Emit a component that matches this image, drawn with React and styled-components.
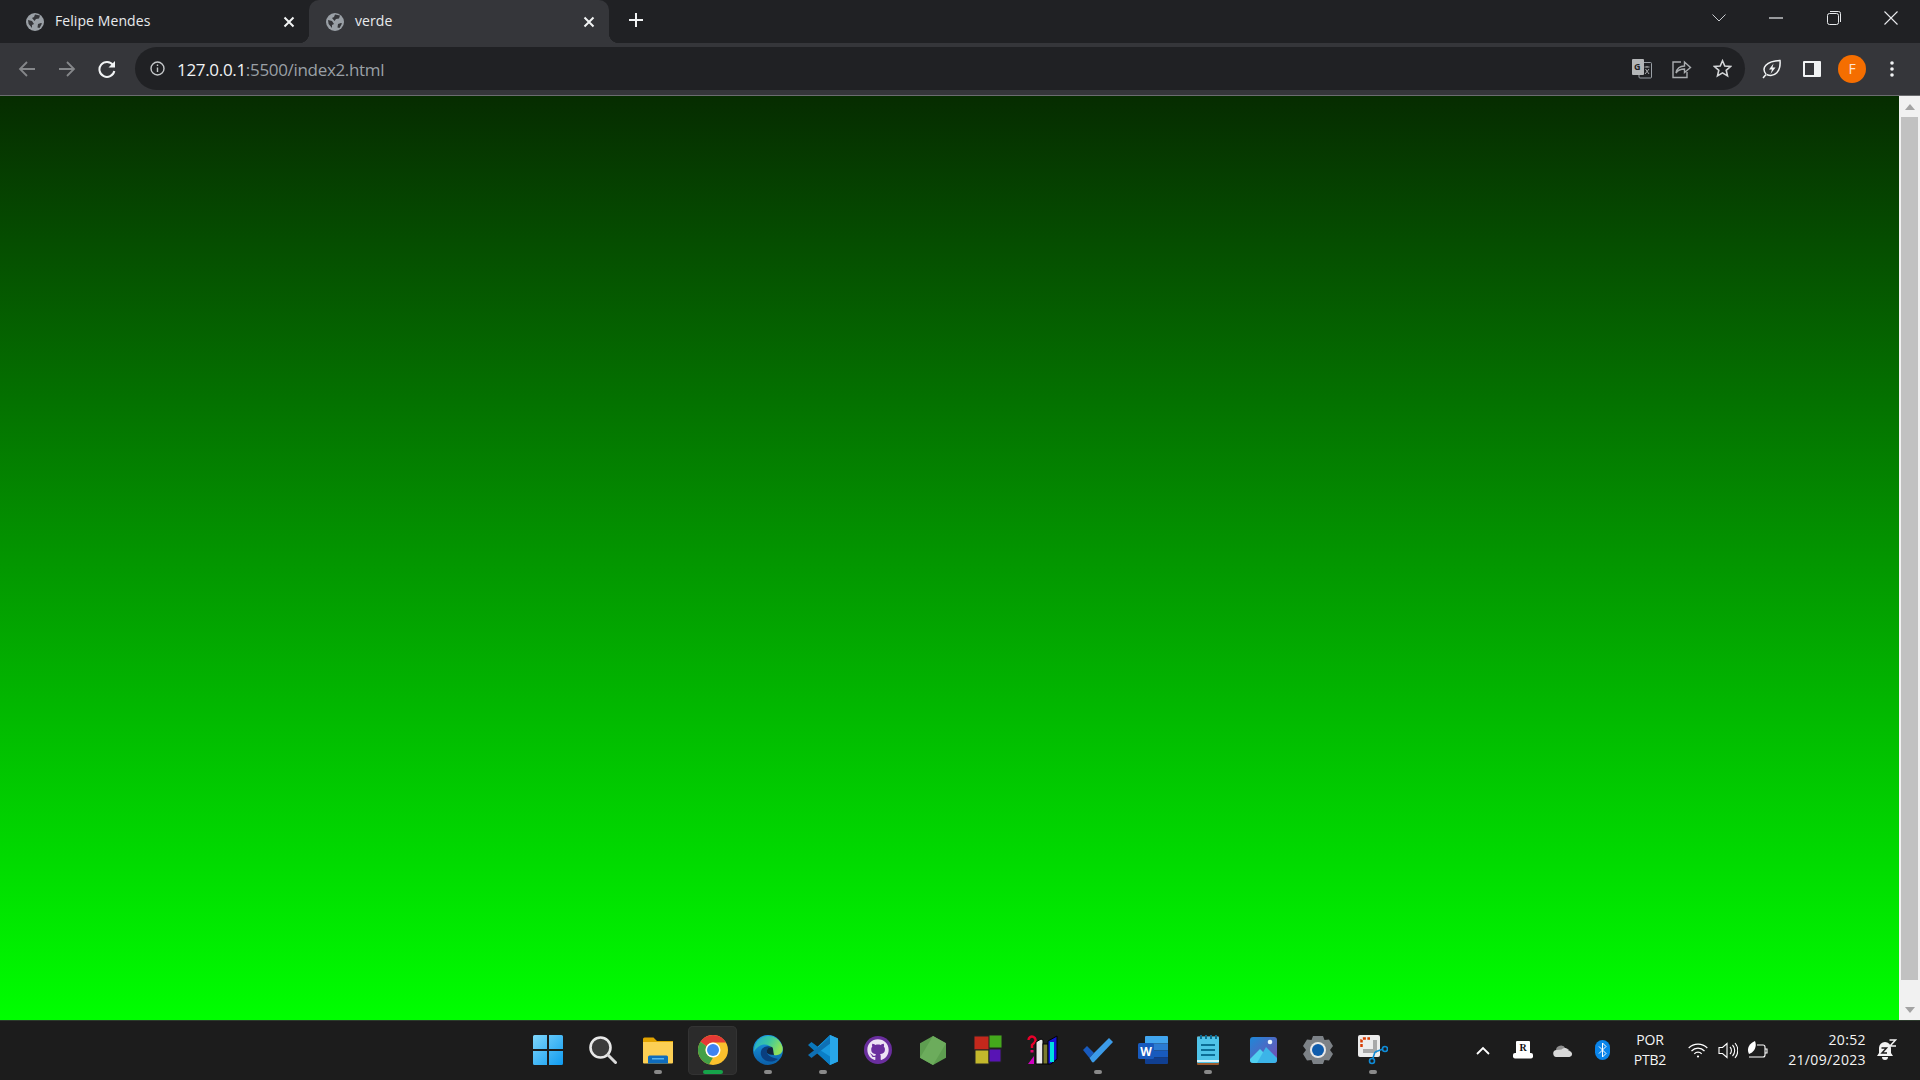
import React from "react"
import styled, { createGlobalStyle } from "styled-components"
import { FaGithub } from "react-icons/fa"

const GlobalStyle = createGlobalStyle`
  html, body {
    margin: 0;
    height: 100%;
    overflow: hidden;
    background: #1c1c1c;
  }
  * {
    box-sizing: border-box;
  }
`

const Screen = styled.div`
  width: 1920px;
  height: 1080px;
  display: flex;
  flex-direction: column;
  font-family: "Open Sans", "Noto Sans", sans-serif;
`

const TabStrip = styled.div`
  height: 43px;
  flex: none;
  display: flex;
  align-items: stretch;
  padding-left: 9px;
  background: #202124;
`

const Tab = styled.div`
  position: relative;
  width: 300px;
  display: flex;
  align-items: center;
  padding: 0 14px 0 17px;
  border-radius: 10px 10px 0 0;
  background: ${(p) => (p.$active ? "#35363a" : "transparent")};
  color: #e8eaed;

  ${(p) =>
    p.$active &&
    `
    &::before, &::after {
      content: "";
      position: absolute;
      bottom: 0;
      width: 10px;
      height: 10px;
    }
    &::before {
      left: -10px;
      background: radial-gradient(circle at 0 0, transparent 10px, #35363a 10.5px);
    }
    &::after {
      right: -10px;
      background: radial-gradient(circle at 100% 0, transparent 10px, #35363a 10.5px);
    }
  `}
`

const TabTitle = styled.span`
  flex: 1;
  padding: 0 0 2px 11px;
  font-size: 14px;
  letter-spacing: 0.08px;
`

const IconSlot = styled.span`
  display: flex;
  align-items: center;
  justify-content: center;
  flex: none;
  width: ${(p) => p.$w || 40}px;
  height: ${(p) => p.$h || 40}px;
  color: ${(p) => p.$color || "#e8eaed"};
`

const NewTab = styled(IconSlot)`
  margin-left: 7px;
`

const StripSpacer = styled.div`
  flex: 1;
`

const WindowControl = styled(IconSlot)`
  width: 57.5px;
  height: 36px;
`

const Toolbar = styled.div`
  height: 53px;
  flex: none;
  display: flex;
  align-items: center;
  padding: 0 8px 1px 7px;
  background: #35363a;
  border-bottom: 1px solid #6b6c6f;
`

const Omnibox = styled.div`
  width: 1610px;
  height: 43px;
  margin-left: 8px;
  margin-right: 7px;
  display: flex;
  align-items: center;
  padding: 0 3px 0 2px;
  border-radius: 22px;
  background: #202124;
`

const Url = styled.div`
  flex: 1;
  padding-top: 1px;
  font-size: 17px;
  letter-spacing: -0.32px;
  color: #9aa0a6;
`

const UrlHost = styled.span`
  color: #f1f3f4;
`

const Avatar = styled.div`
  width: 28px;
  height: 28px;
  border-radius: 50%;
  background: #f56e00;
  color: #ffe4d0;
  font-size: 14px;
  display: flex;
  align-items: center;
  justify-content: center;
`

const Main = styled.div`
  flex: 1;
  min-height: 0;
  display: flex;
`

const Page = styled.div`
  flex: 1;
  background: linear-gradient(to bottom, #062c00, #00ff00);
`

const Scrollbar = styled.div`
  width: 21px;
  display: flex;
  flex-direction: column;
  align-items: center;
  background: #f1f1f1;
`

const ScrollArrow = styled.div`
  height: 21px;
  flex: none;
  display: flex;
  align-items: center;
  justify-content: center;
`

const ScrollThumb = styled.div`
  width: 17px;
  height: 863px;
  background: #c1c1c1;
`

const ScrollTrack = styled.div`
  flex: 1;
`

const Taskbar = styled.div`
  height: 60px;
  flex: none;
  display: flex;
  align-items: center;
  padding: 0 0 1px 520px;
  background: #1c1c1c;
  border-top: 1px solid #2c3a2c;
`

const AppButton = styled.div`
  position: relative;
  width: ${(p) => (p.$active ? 49 : 55.07)}px;
  height: 49px;
  margin: 0 ${(p) => (p.$active ? 3.03 : 0)}px;
  display: flex;
  align-items: center;
  justify-content: center;
  border-radius: 5px;
  background: ${(p) => (p.$active ? "#2b2b2b" : "transparent")};
  box-shadow: ${(p) => (p.$active ? "inset 0 0 0 1px #333" : "none")};
`

const Pip = styled.span`
  position: absolute;
  left: 50%;
  bottom: 1px;
  transform: translateX(-50%);
  width: ${(p) => (p.$active ? 20 : 8)}px;
  height: 4px;
  border-radius: 2px;
  background: ${(p) => (p.$active ? "#16a34a" : "#8a8a8a")};
`

const Tray = styled.div`
  display: flex;
  align-items: center;
  margin-left: 62px;
  color: #fff;
`

const TrayIcon = styled(IconSlot)`
  width: ${(p) => p.$w || 40}px;
  height: 40px;
`

const Lang = styled.div`
  width: 54px;
  margin: 0 6px 0 0;
  text-align: center;
  font-size: 14px;
  line-height: 20px;
  letter-spacing: -0.2px;
  color: #f4f4f4;
`

const Clock = styled.div`
  width: 93px;
  text-align: right;
  font-size: 14px;
  line-height: 20px;
  letter-spacing: 0.35px;
  color: #f4f4f4;
`

const Globe = () => (
  <svg width="18" height="18" viewBox="0 0 18 18">
    <circle cx="9" cy="9" r="9" fill="#9aa0a6" />
    <path d="M2 7l4 1 2 3-2 1v3L2.600 11zM9 1.500l5 1-1 3-3 .5-1.500 2L6 5l2-1zM12 11l3-1 1 .5-2.500 4.500-2-.5z" fill="#35363a" />
  </svg>
)

const Close = () => (
  <svg width="12" height="12" viewBox="0 0 12 12" fill="none" stroke="#f1f3f4" strokeWidth="2">
    <path d="M1.500 1.500l9 9M10.500 1.500l-9 9" />
  </svg>
)

const Plus = () => (
  <svg width="16" height="16" viewBox="0 0 16 16" fill="none" stroke="#f1f3f4" strokeWidth="2">
    <path d="M8 1v14M1 8h14" />
  </svg>
)

const Chevron = () => (
  <svg width="14" height="8" viewBox="0 0 14 8" fill="none" stroke="#c9ccd0" strokeWidth="1">
    <path d="M.5.500L7 7 13.500.5" />
  </svg>
)

const Minimize = () => (
  <svg width="14" height="2" viewBox="0 0 14 2">
    <rect width="14" height="1.200" y=".4" fill="#e8eaed" />
  </svg>
)

const Restore = () => (
  <svg width="14" height="14" viewBox="0 0 14 14" fill="none" stroke="#e8eaed" strokeWidth="1">
    <rect x=".5" y="2.500" width="11" height="11" rx="2" />
    <path d="M3 .5h8.500a2 2 0 0 1 2 2V11" />
  </svg>
)

const WinClose = () => (
  <svg width="14" height="14" viewBox="0 0 14 14" fill="none" stroke="#e8eaed" strokeWidth="1.100">
    <path d="M.5.500l13 13M13.500.5l-13 13" />
  </svg>
)

const Arrow = ({ flip, color }) => (
  <svg width="18" height="18" viewBox="0 0 18 18" fill="none" stroke={color} strokeWidth="1.800" style={flip ? { transform: "scaleX(-1)" } : undefined}>
    <path d="M17 9H2M9 2L2 9l7 7" />
  </svg>
)

const Reload = () => (
  <svg width="18" height="18" viewBox="0 0 18 18" fill="none">
    <path d="M15 5A7.500 7.500 0 1 0 16.300 11" stroke="#f1f3f4" strokeWidth="2" />
    <path d="M17 1v6.500h-6.500z" fill="#f1f3f4" />
  </svg>
)

const Info = () => (
  <svg width="15" height="15" viewBox="0 0 15 15" fill="none" stroke="#c4c7c9" strokeWidth="1.400">
    <circle cx="7.500" cy="7.500" r="6.500" />
    <path d="M7.500 6.500v4.500M7.500 3.500v1.600" />
  </svg>
)

const Translate = () => (
  <svg width="20" height="20" viewBox="0 0 20 20">
    <rect x="7" y="3.500" width="12.500" height="15.500" rx="1" fill="#202124" stroke="#9aa0a6" />
    <rect x="0" y="0" width="12" height="16" rx="1" fill="#b4b6b8" />
    <text x="2" y="11" fontSize="9" fontWeight="700" fill="#202124" fontFamily="Open Sans">G</text>
    <path d="M12.500 8h5M15 7v1.500M13 15l4-5M13.500 10l3.500 5" fill="none" stroke="#b4b6b8" strokeWidth=".9" />
  </svg>
)

const Share = () => (
  <svg width="20" height="20" viewBox="0 0 20 20" fill="none" stroke="#a9acaf" strokeWidth="1.400">
    <path d="M9 3H1v15.500h14V13" />
    <path d="M4 14c1-5 4-7 8.500-7V3l6 5.500-6 5V10c-4 0-6.500 1-8.500 4z" />
  </svg>
)

const Star = () => (
  <svg width="19" height="19" viewBox="0 0 19 19" fill="none" stroke="#d4d6d8" strokeWidth="1.600">
    <path d="M9.500 1.800l2.300 5.200 5.700.5-4.300 3.800 1.300 5.600-5-3-5 3 1.300-5.600L1.500 7.500l5.700-.5z" />
  </svg>
)

const Leaf = () => (
  <svg width="20" height="20" viewBox="0 0 20 20" fill="none">
    <path d="M4 15C-1 9 4 2 18 1.500 19 12 13 19 4.500 15.500" stroke="#f1f3f4" strokeWidth="1.500" />
    <path d="M1 19l3-3.500" stroke="#f1f3f4" strokeWidth="1.500" />
    <path d="M11.500 4.500L7 10.500h3L8.500 15l5-6.500h-3z" fill="#f1f3f4" />
  </svg>
)

const SidePanel = () => (
  <svg width="18" height="16" viewBox="0 0 18 16">
    <rect width="18" height="16" rx="1" fill="#f1f3f4" />
    <rect x="2" y="2" width="9" height="12" fill="#35363a" />
  </svg>
)

const Kebab = () => (
  <svg width="4" height="16" viewBox="0 0 4 16" fill="#f1f3f4">
    <circle cx="2" cy="2" r="1.800" />
    <circle cx="2" cy="8" r="1.800" />
    <circle cx="2" cy="14" r="1.800" />
  </svg>
)

const Triangle = ({ down }) => (
  <svg width="10" height="6" viewBox="0 0 10 6">
    <path d={down ? "M0 0h10L5 6z" : "M0 6h10L5 0z"} fill="#a3a3a3" />
  </svg>
)

// taskbar icons

const WindowsIcon = () => (
  <svg width="30" height="30" viewBox="0 0 30 30">
    <defs>
      <linearGradient id="win" x1="0" y1="0" x2="1" y2="1">
        <stop offset="0" stopColor="#7fd6fb" />
        <stop offset="1" stopColor="#0f9bf0" />
      </linearGradient>
    </defs>
    <path d="M0 1.500A1.500 1.500 0 0 1 1.500 0H14v14H0zM16 0h12.500A1.500 1.500 0 0 1 30 1.500V14H16zM0 16h14v14H1.500A1.500 1.500 0 0 1 0 28.500zM16 16h14v12.500a1.500 1.500 0 0 1-1.500 1.500H16z" fill="url(#win)" />
  </svg>
)

const SearchIcon = () => (
  <svg width="28" height="28" viewBox="0 0 28 28" fill="none">
    <circle cx="11.500" cy="11.500" r="10" fill="#3c3c3c" stroke="#e8e8e8" strokeWidth="2.600" />
    <path d="M19 19l7.500 7.500" stroke="#d9d9d9" strokeWidth="3" strokeLinecap="round" />
  </svg>
)

const FolderIcon = () => (
  <svg width="30" height="28" viewBox="0 0 30 28">
    <path d="M0 3a1.500 1.500 0 0 1 1.500-1.500h9L14 5h16v6H0z" fill="#e2a300" />
    <path d="M0 6h30v20.500a1 1 0 0 1-1 1H1a1 1 0 0 1-1-1z" fill="#fccf54" />
    <path d="M5 21a1.500 1.500 0 0 1 1.500-1.500h17A1.500 1.500 0 0 1 25 21v6.500H5z" fill="#0f6cbd" />
    <rect x="9" y="22" width="12" height="1.500" fill="#58b4ee" />
  </svg>
)

const ChromeIcon = () => (
  <svg width="30" height="30" viewBox="0 0 30 30">
    <circle cx="15" cy="15" r="15" fill="#fbc02d" />
    <path d="M15 0a15 15 0 0 1 13 7.500H15A7.500 7.500 0 0 0 8.500 11.300L2.500 6.700A15 15 0 0 1 15 0z" fill="#e53935" />
    <path d="M2.500 6.700l6 4.600A7.500 7.500 0 0 0 15 22.500L11 29.500A15 15 0 0 1 2.500 6.700z" fill="#43a047" />
    <circle cx="15" cy="15" r="7.500" fill="#fff" />
    <circle cx="15" cy="15" r="6" fill="#3f83f1" />
  </svg>
)

const EdgeIcon = () => (
  <svg width="30" height="30" viewBox="0 0 30 30">
    <defs>
      <linearGradient id="edgeBody" x1="0" y1="0" x2="0" y2="1">
        <stop offset="0" stopColor="#1a9de6" />
        <stop offset="1" stopColor="#0b5fa8" />
      </linearGradient>
      <linearGradient id="edgeTop" x1="0" y1="0" x2="1" y2=".4">
        <stop offset="0" stopColor="#1fa6d8" />
        <stop offset=".55" stopColor="#3cc8a0" />
        <stop offset="1" stopColor="#8fe05c" />
      </linearGradient>
    </defs>
    <circle cx="15" cy="15" r="15" fill="url(#edgeBody)" />
    <path d="M8 3C14-1 26 0 29.500 12 31 19 25 21 21 20c-3-1-1-4-2-6-2-5-9-6-14-2-2 1.500-3 3-4 5C1 11 3 6 8 3z" fill="url(#edgeTop)" />
    <path d="M25 24c-6 4.500-15 3-17-4-1.500-6 4-10.500 11-8-4 0-6 3-5 6 1 3 6 5 11 6z" fill="#0a3f80" />
    <path d="M14 18c-1-3 1-6 5-6 1.500 1 1 4 2 8-3 0-6-1-7-2z" fill="#12233f" />
  </svg>
)

const VSCodeIcon = () => (
  <svg width="30" height="30" viewBox="0 0 30 30">
    <path d="M22 0l8 3.500v23L22 30 6 15z" fill="#1a9ae0" />
    <path d="M22 0v8.500L12 15l10 6.500V30L0 10l3.500-3 7 5.300z" fill="#0a7cc4" opacity="0.95" />
    <path d="M0 20l3.500 3L22 8.500V3z" fill="#0f70b4" />
    <path d="M22 0l8 3.500v23L22 30z" fill="#28a7ea" />
  </svg>
)

const GithubBadge = styled.span`
  width: 28px;
  height: 28px;
  border-radius: 50%;
  background: #6a2e9e;
  color: #ece3f4;
  display: flex;
  align-items: center;
  justify-content: center;
  font-size: 22px;
`

const GithubIcon = () => (
  <GithubBadge>
    <FaGithub />
  </GithubBadge>
)

const NodeIcon = () => (
  <svg width="26" height="29" viewBox="0 0 26 29">
    <path d="M13 0l13 7.300v14.400L13 29 0 21.700V7.300z" fill="#5e9e50" />
    <path d="M13 0l13 7.300L13 29 0 21.700z" fill="#6cac5c" />
  </svg>
)

const ColorBlocksIcon = () => (
  <svg width="28" height="30" viewBox="0 0 28 30">
    <rect x="0" y="1" width="16" height="14" fill="#c3281c" stroke="#222" />
    <rect x="15" y="0" width="13" height="13" fill="#44a81c" stroke="#222" />
    <rect x="1" y="15" width="14" height="14" fill="#c4b82c" stroke="#222" />
    <rect x="15" y="14" width="12" height="13" fill="#5814b4" stroke="#222" />
  </svg>
)

const HelpBooksIcon = () => (
  <svg width="32" height="30" viewBox="0 0 32 30">
    <path d="M1.500 5a3.500 3.500 0 1 1 6 2.500L5 10v3" fill="none" stroke="#e8002a" strokeWidth="2.400" />
    <rect x="3.500" y="15" width="3" height="2.500" fill="#e6006e" />
    <path d="M1 29l6-8v8z" fill="#d000c0" />
    <path d="M9 7l5-3 2 1v24H9z" fill="#e8e8e8" stroke="#000" />
    <rect x="16" y="9" width="5" height="20" fill="#7a7a30" stroke="#000" />
    <path d="M21 6l9-5v23l-6 5h-3z" fill="#1414d8" stroke="#000" />
    <rect x="23" y="7" width="4" height="20" fill="#00e0e0" />
  </svg>
)

const TodoIcon = () => (
  <svg width="30" height="26" viewBox="0 0 30 26">
    <path d="M0 13l4-4 7 7-4.500 5z" fill="#185abd" />
    <path d="M6.500 21L11 16 26 1l4 4-19 20a1.500 1.500 0 0 1-2 0z" fill="#3c9be8" />
  </svg>
)

const WordIcon = () => (
  <svg width="30" height="28" viewBox="0 0 30 28">
    <path d="M7 1a1 1 0 0 1 1-1h21a1 1 0 0 1 1 1v6.500H7z" fill="#41a5ee" />
    <rect x="7" y="7.500" width="23" height="7" fill="#2b7cd3" />
    <rect x="7" y="14.500" width="23" height="7" fill="#185abd" />
    <path d="M7 21.500h23V27a1 1 0 0 1-1 1H8a1 1 0 0 1-1-1z" fill="#103f91" />
    <rect x="0" y="7" width="16" height="16" rx="1.500" fill="#185abd" />
    <text x="8" y="19.500" textAnchor="middle" fontSize="12" fontWeight="700" fill="#fff" fontFamily="Open Sans">W</text>
  </svg>
)

const NotepadIcon = () => (
  <svg width="22" height="30" viewBox="0 0 22 30">
    <rect y="1.500" width="22" height="28.500" rx="1" fill="#9c5a2c" />
    <rect y="1.500" width="22" height="26.500" rx="1" fill="#4fc3e8" />
    <path d="M0 25h22v2H0z" fill="#fff" opacity=".8" />
    <path d="M3 0h2v4H3zM8 0h2v4H8zM13 0h2v4h-2zM18 0h2v4h-2z" fill="#0c6d96" />
    <path d="M4 9h14v2H4zM4 14h14v2H4zM4 19h14v2H4z" fill="#0c6d96" />
  </svg>
)

const PhotosIcon = () => (
  <svg width="27" height="26" viewBox="0 0 27 26">
    <defs>
      <linearGradient id="ph" x1="0" y1="0" x2="1" y2="1">
        <stop offset="0" stopColor="#1e88d8" />
        <stop offset="1" stopColor="#7a4bb0" />
      </linearGradient>
    </defs>
    <rect width="27" height="26" rx="3" fill="url(#ph)" />
    <circle cx="20" cy="5" r="2.300" fill="#e8f4fc" />
    <path d="M0 22l10-10 5 5-6 9H3a3 3 0 0 1-3-3z" fill="#50d0f0" />
    <path d="M7 26L16 10l11 11v2a3 3 0 0 1-3 3z" fill="#3cb4e8" />
  </svg>
)

const SettingsIcon = () => (
  <svg width="30" height="28" viewBox="0 0 30 28">
    <path d="M10 0h10l1.500 4 4.500-.5 4 6.500-3 4 3 4-4 6.500-4.500-.5L20 28H10l-1.500-4-4.500.5L0 18l3-4-3-4 4-6.500 4.500.5z" fill="#7d8287" />
    <circle cx="15" cy="14" r="8" fill="#e8e8e8" />
    <circle cx="15" cy="14" r="6" fill="#0f5cac" />
  </svg>
)

const SnipIcon = () => (
  <svg width="30" height="30" viewBox="0 0 30 30" fill="none">
    <rect width="22" height="22" rx="2" fill="#ececec" />
    <path d="M15 5h4v13H5v-4h10z" fill="#a8a8a8" />
    <path d="M3.500 12V5a1.500 1.500 0 0 1 1.500-1.500h7" stroke="#d83b01" strokeWidth="2.500" strokeDasharray="3 1.500" />
    <path d="M17 17l8-3M17 17l-2 6" stroke="#0f8cd8" strokeWidth="1.600" />
    <circle cx="27" cy="14" r="2.500" stroke="#0f8cd8" strokeWidth="1.600" />
    <circle cx="14" cy="26" r="2.500" stroke="#0f8cd8" strokeWidth="1.600" />
  </svg>
)

const apps = [
  { icon: WindowsIcon },
  { icon: SearchIcon },
  { icon: FolderIcon, pip: true },
  { icon: ChromeIcon, pip: true, active: true },
  { icon: EdgeIcon, pip: true },
  { icon: VSCodeIcon, pip: true },
  { icon: GithubIcon },
  { icon: NodeIcon },
  { icon: ColorBlocksIcon },
  { icon: HelpBooksIcon },
  { icon: TodoIcon, pip: true },
  { icon: WordIcon },
  { icon: NotepadIcon, pip: true },
  { icon: PhotosIcon },
  { icon: SettingsIcon },
  { icon: SnipIcon, pip: true },
]

const TrayChevron = () => (
  <svg width="14" height="9" viewBox="0 0 14 9" fill="none" stroke="#fff" strokeWidth="1.800">
    <path d="M1 8l6-6 6 6" />
  </svg>
)

const RBadge = () => (
  <svg width="20" height="18" viewBox="0 0 20 18">
    <path d="M3 1a1 1 0 0 1 1-1h12a1 1 0 0 1 1 1v11H3z" fill="#fff" />
    <rect y="12" width="20" height="5.500" rx="2" fill="#fff" />
    <text x="10" y="10" textAnchor="middle" fontSize="10" fontWeight="700" fill="#111" fontFamily="Liberation Serif">R</text>
  </svg>
)

const CloudIcon = () => (
  <svg width="20" height="13" viewBox="0 0 20 13">
    <path d="M3 7a5 5 0 0 1 9.500-2.500A4 4 0 0 1 17 8L7 11z" fill="#8e8e8e" />
    <path d="M4 13a3.500 3.500 0 0 1-.5-7l5-.5a4 4 0 0 1 7 1.500 3 3 0 0 1 1 6z" fill="#d8d8d8" />
  </svg>
)

const BluetoothIcon = () => (
  <svg width="15" height="20" viewBox="0 0 15 20">
    <rect width="15" height="20" rx="7.500" fill="#0a84ea" />
    <path d="M4 6.500l7 7L7.500 17V3L11 6.500l-7 7" fill="none" stroke="#fff" strokeWidth="1" />
  </svg>
)

const WifiIcon = () => (
  <svg width="20" height="15" viewBox="0 0 20 15" fill="none" stroke="#fff" strokeWidth="1.200">
    <path d="M.7 5a13 13 0 0 1 18.600 0M3.500 8a9 9 0 0 1 13 0M6.300 10.800a5 5 0 0 1 7.400 0" />
    <circle cx="10" cy="13.500" r="1.100" fill="#fff" stroke="none" />
  </svg>
)

const VolumeIcon = () => (
  <svg width="20" height="17" viewBox="0 0 20 17" fill="none" stroke="#fff" strokeWidth="1.100">
    <path d="M1 5.500h3.500L9 1.500v14l-4.500-4H1z" />
    <path d="M12 5a5 5 0 0 1 0 7M14.500 3a8 8 0 0 1 0 11M17 1a11.500 11.500 0 0 1 0 15" />
  </svg>
)

const BatteryLeaf = () => (
  <svg width="21" height="18" viewBox="0 0 21 18" fill="none" stroke="#fff" strokeWidth="1.100">
    <path d="M10 4h6a2 2 0 0 1 2 2v8a2 2 0 0 1-2 2H2" />
    <path d="M18 8h2v4h-2" />
    <path d="M2 13C-1 7 3 2 8 0c2 5 0 11-6 13z" fill="#fff" stroke="none" />
  </svg>
)

const BellIcon = () => (
  <svg width="20" height="22" viewBox="0 0 20 22">
    <path d="M8 3a6 6 0 0 1 6 6v5l2 3H0l2-3V9a6 6 0 0 1 6-6z" fill="#f2f2f2" />
    <path d="M5 18h6a3 3 0 0 1-6 0z" fill="#f2f2f2" />
    <path d="M4.500 9h5l-4.500 5h5" fill="none" stroke="#1c1c1c" strokeWidth="1.500" />
    <path d="M12.500 1h6l-5.500 6h6" fill="none" stroke="#f2f2f2" strokeWidth="1.500" />
  </svg>
)

export default function App() {
  return (
    <Screen>
      <GlobalStyle />
      <TabStrip>
        <Tab>
          <Globe />
          <TabTitle>Felipe Mendes</TabTitle>
          <Close />
        </Tab>
        <Tab $active>
          <Globe />
          <TabTitle>verde</TabTitle>
          <Close />
        </Tab>
        <NewTab>
          <Plus />
        </NewTab>
        <StripSpacer />
        <WindowControl>
          <Chevron />
        </WindowControl>
        <WindowControl>
          <Minimize />
        </WindowControl>
        <WindowControl>
          <Restore />
        </WindowControl>
        <WindowControl>
          <WinClose />
        </WindowControl>
      </TabStrip>
      <Toolbar>
        <IconSlot>
          <Arrow color="#85878a" />
        </IconSlot>
        <IconSlot>
          <Arrow flip color="#85878a" />
        </IconSlot>
        <IconSlot>
          <Reload />
        </IconSlot>
        <Omnibox>
          <IconSlot>
            <Info />
          </IconSlot>
          <Url>
            <UrlHost>127.0.0.1</UrlHost>:5500/index2.html
          </Url>
          <IconSlot>
            <Translate />
          </IconSlot>
          <IconSlot>
            <Share />
          </IconSlot>
          <IconSlot>
            <Star />
          </IconSlot>
        </Omnibox>
        <IconSlot>
          <Leaf />
        </IconSlot>
        <IconSlot>
          <SidePanel />
        </IconSlot>
        <IconSlot>
          <Avatar>F</Avatar>
        </IconSlot>
        <IconSlot>
          <Kebab />
        </IconSlot>
      </Toolbar>
      <Main>
        <Page />
        <Scrollbar>
          <ScrollArrow>
            <Triangle />
          </ScrollArrow>
          <ScrollThumb />
          <ScrollTrack />
          <ScrollArrow>
            <Triangle down />
          </ScrollArrow>
        </Scrollbar>
      </Main>
      <Taskbar>
        {apps.map((app, i) => (
          <AppButton key={i} $active={app.active}>
            <app.icon />
            {app.pip && <Pip $active={app.active} />}
          </AppButton>
        ))}
        <Tray>
          <TrayIcon>
            <TrayChevron />
          </TrayIcon>
          <TrayIcon>
            <RBadge />
          </TrayIcon>
          <TrayIcon>
            <CloudIcon />
          </TrayIcon>
          <TrayIcon>
            <BluetoothIcon />
          </TrayIcon>
          <Lang>
            POR
            <br />
            PTB2
          </Lang>
          <TrayIcon $w={30}>
            <WifiIcon />
          </TrayIcon>
          <TrayIcon $w={30}>
            <VolumeIcon />
          </TrayIcon>
          <TrayIcon $w={30}>
            <BatteryLeaf />
          </TrayIcon>
          <Clock>
            20:52
            <br />
            21/09/2023
          </Clock>
          <TrayIcon $w={42}>
            <BellIcon />
          </TrayIcon>
        </Tray>
      </Taskbar>
    </Screen>
  )
}
